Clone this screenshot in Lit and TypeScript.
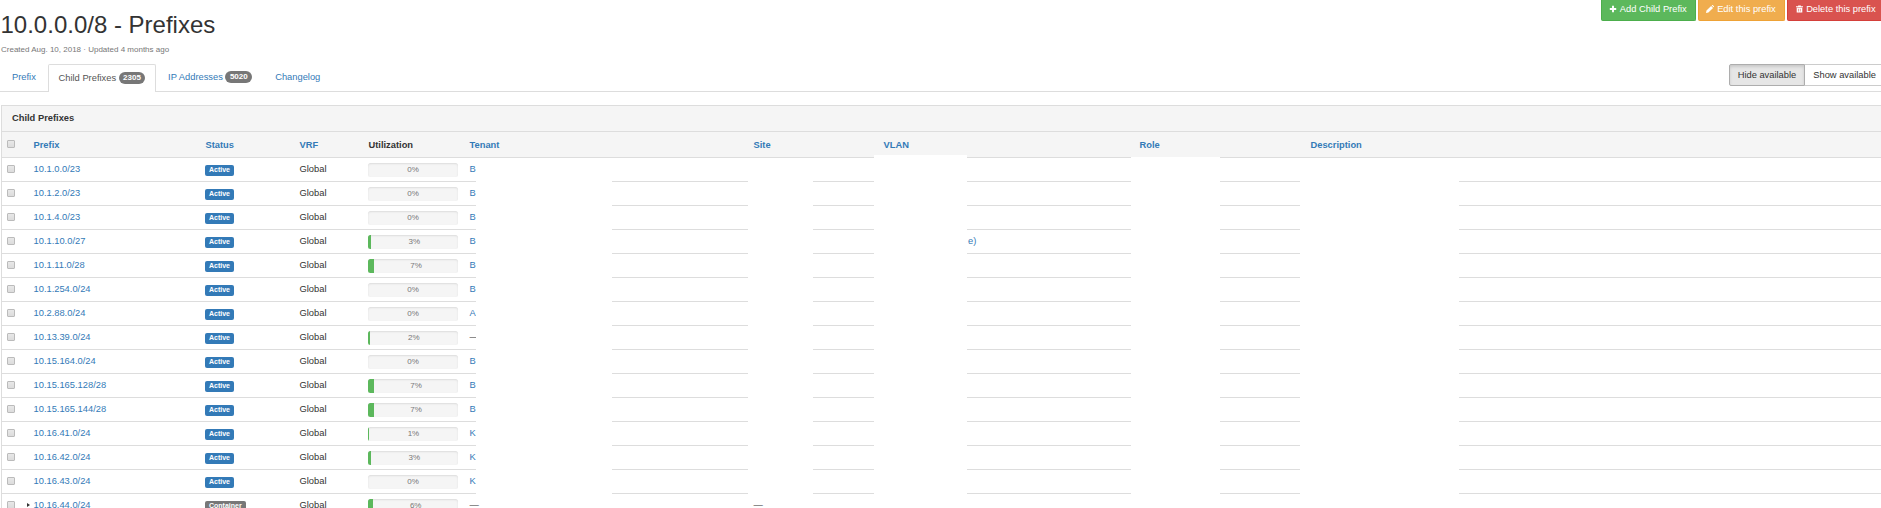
import { LitElement, html, css } from "lit";
import { customElement } from "lit/decorators.js";

type Row = [string, number, string];
const rows: Row[] = [
  ["10.1.0.0/23", 0, "B"],
  ["10.1.2.0/23", 0, "B"],
  ["10.1.4.0/23", 0, "B"],
  ["10.1.10.0/27", 3, "B"],
  ["10.1.11.0/28", 7, "B"],
  ["10.1.254.0/24", 0, "B"],
  ["10.2.88.0/24", 0, "A"],
  ["10.13.39.0/24", 2, "—"],
  ["10.15.164.0/24", 0, "B"],
  ["10.15.165.128/28", 7, "B"],
  ["10.15.165.144/28", 7, "B"],
  ["10.16.41.0/24", 1, "K"],
  ["10.16.42.0/24", 3, "K"],
  ["10.16.43.0/24", 0, "K"],
  ["10.16.44.0/24", 6, "—"],
];

@customElement("app-root")
export class AppRoot extends LitElement {
  static styles = css`
    :host { display: block; width: 1881px; height: 508px; overflow: hidden; position: relative; background: #fff;
      font-family: "Liberation Sans", Arial, sans-serif; font-size: 9.33px; color: #333; }
    a { color: #337ab7; text-decoration: none; }
    .top { display: flex; justify-content: space-between; align-items: flex-start; height: 64px; padding-left: 1px; }
    h1 { margin: 12px 0 0 -.5px; font-size: 24px; line-height: 26px; font-weight: 400; }
    .meta { margin-top: 7px; font-size: 8px; line-height: 10px; color: #777; }
    .actions { display: flex; gap: 2px; margin-right: -4px; }
    .btn { height: 21px; box-sizing: border-box; display: flex; align-items: center; gap: 3px; padding: 0 8.4px 3px 7px; color: #fff; border-radius: 0 0 2px 2px; border: 1px solid; border-top: 0; white-space: nowrap; }
    .btn svg { width: 8px; height: 8px; fill: #fff; }
    .green { background: #5cb85c; border-color: #4cae4c; }
    .orange { background: #f0ad4e; border-color: #eea236; }
    .red { background: #d9534f; border-color: #d43f3a; padding-left: 8px; }
    .red svg { width: 7px; }
    .tabbar { display: flex; justify-content: space-between; align-items: flex-start; height: 27px; border-bottom: 1px solid #ddd; padding-left: 1px; }
    .tabs { display: flex; height: 28px; }
    .tab { box-sizing: border-box; padding: 0 11px 1px; margin-right: 1px; display: flex; align-items: center; gap: 2.5px; height: 27px; white-space: nowrap; }
    .tab.active { background: #fff; color: #555; border: 1px solid #ddd; border-bottom: 0; border-radius: 2px 2px 0 0; height: 28px; padding: 0 9.7px 1px; }
    .badge { background: #777; color: #fff; font-size: 8px; font-weight: 700; border-radius: 6px; padding: 0 4.5px; line-height: 12px; height: 12px; }
    .toggle { display: flex; height: 22px; margin-right: -4px; }
    .toggle div { box-sizing: border-box; height: 22px; display: flex; align-items: center; padding: 0 8px; border: 1px solid #ccc; white-space: nowrap; }
    .toggle .on { background: #e6e6e6; border-color: #adadad; border-radius: 2px 0 0 2px; box-shadow: inset 0 2px 3px rgba(0,0,0,.125); }
    .toggle .off { border-left: 0; background: #fff; color: #333; }
    .panel { margin: 13px 0 0 1px; border-left: 1px solid #ddd; border-top: 1px solid #ddd; }
    .heading { box-sizing: border-box; background: #f5f5f5; height: 26px; border-bottom: 1px solid #ddd; display: flex; align-items: center; padding: 0 0 1px 10px; font-weight: 700; }
    .row { display: grid; grid-template-columns: 31.5px 172px 94px 69px 101px 284px 130px 256px 171px 1fr; height: 24px; box-sizing: border-box; border-bottom: 1px solid #ddd; align-items: center; }
    .row > * { white-space: nowrap; }
    .text { margin-bottom: 1px; }
    .head { background: #f5f5f5; height: 26px; font-weight: 700; }
    .cb { width: 6px; height: 6px; margin: 0 0 2px 5.3px; background: linear-gradient(#e8e8e8, #dcdcdc); border: 1px solid #bbb; border-radius: 1px; }
    .prefix { position: relative; }
    .caret { position: absolute; left: -6.5px; top: 3px; width: 0; height: 0; border-left: 3px solid #333; border-top: 2.5px solid transparent; border-bottom: 2.5px solid transparent; }
    .label { justify-self: start; margin-top: 1px; margin-left: -.5px; background: #337ab7; color: #fff; font-size: 7px; font-weight: 700; padding: 0 4px 1px; line-height: 10px; border-radius: 2px; }
    .label.gray { background: #777; }
    .bar { width: 90px; height: 14px; margin-top: 1px; margin-left: -.5px; background: #f5f5f5; border-radius: 2.5px; box-shadow: inset 0 1px 2px rgba(0,0,0,.1); overflow: hidden; font-size: 8px; color: #777; display: flex; align-items: stretch; }
    .fill { background: #5cb85c; flex: none; }
    .pct { flex: 1; text-align: center; line-height: 14px; }
    .shift { margin-left: 84.5px; }
    .mask { position: absolute; background: #fff; top: 158px; height: 336px; }
    .m1 { left: 476px; width: 136px; }
    .m2 { left: 748px; width: 65px; }
    .m3 { left: 874px; width: 93px; top: 155px; height: 339px; }
    .m4 { left: 1131px; width: 89px; top: 157px; height: 337px; }
    .m5 { left: 1300px; width: 159px; }
  `;

  private row(r: Row, i: number) {
    const container = r[0] === "10.16.44.0/24";
    return html`<div class="row">
      <div class="cb"></div>
      <div class="prefix text">${container ? html`<span class="caret"></span>` : ""}<a href="#">${r[0]}</a></div>
      <span class="label ${container ? "gray" : ""}">${container ? "Container" : "Active"}</span>
      <div class="text">Global</div>
      <div class="bar">${r[1] ? html`<span class="fill" style="width:${r[1] * 0.9}px"></span>` : ""}<span class="pct">${r[1]}%</span></div>
      <div class="text">${r[2] === "—" ? r[2] : html`<a href="#">${r[2]}</a>`}</div>
      <div class="text">${container ? "—" : ""}</div>
      <div class="text">${i === 3 ? html`<a class="shift" href="#">e)</a>` : ""}</div>
      <div></div><div></div>
    </div>`;
  }

  render() {
    return html`
      <div class="top">
        <div><h1>10.0.0.0/8 - Prefixes</h1><div class="meta">Created Aug. 10, 2018 · Updated 4 months ago</div></div>
        <div class="actions">
          <div class="btn green"><svg viewBox="0 0 10 10"><path d="M3.8 1h2.4v2.8H9v2.4H6.2V9H3.8V6.2H1V3.8h2.8z"/></svg>Add Child Prefix</div>
          <div class="btn orange"><svg viewBox="0 0 10 10"><path d="M0 10l.6-3L6.4 1.2l2.4 2.4L3 9.400zM7.100.6l.6-.6h.6L10 1.700v.6l-.6.6z"/></svg>Edit this prefix</div>
          <div class="btn red"><svg viewBox="0 0 10 10"><path d="M0 1.200h3V0h4v1.200h3v1.300H0zM1 3.200h8V10H1zM3 4.500v4h.8v-4zM5.600 4.500v4h.8v-4z" fill-rule="evenodd"/></svg>Delete this prefix</div>
        </div>
      </div>
      <div class="tabbar">
        <div class="tabs">
          <a class="tab" href="#">Prefix</a>
          <div class="tab active">Child Prefixes <span class="badge">2305</span></div>
          <a class="tab" href="#">IP Addresses <span class="badge">5020</span></a>
          <a class="tab" href="#">Changelog</a>
        </div>
        <div class="toggle"><div class="on">Hide available</div><div class="off">Show available</div></div>
      </div>
      <div class="panel">
        <div class="heading">Child Prefixes</div>
        <div class="row head">
          <div class="cb"></div><a href="#">Prefix</a><a href="#">Status</a><a href="#">VRF</a><div>Utilization</div>
          <a href="#">Tenant</a><a href="#">Site</a><a href="#">VLAN</a><a href="#">Role</a><a href="#">Description</a>
        </div>
        ${rows.map((r, i) => this.row(r, i))}
      </div>
      <div class="mask m1"></div>
      <div class="mask m2"></div>
      <div class="mask m3"></div>
      <div class="mask m4"></div>
      <div class="mask m5"></div>
    `;
  }
}
